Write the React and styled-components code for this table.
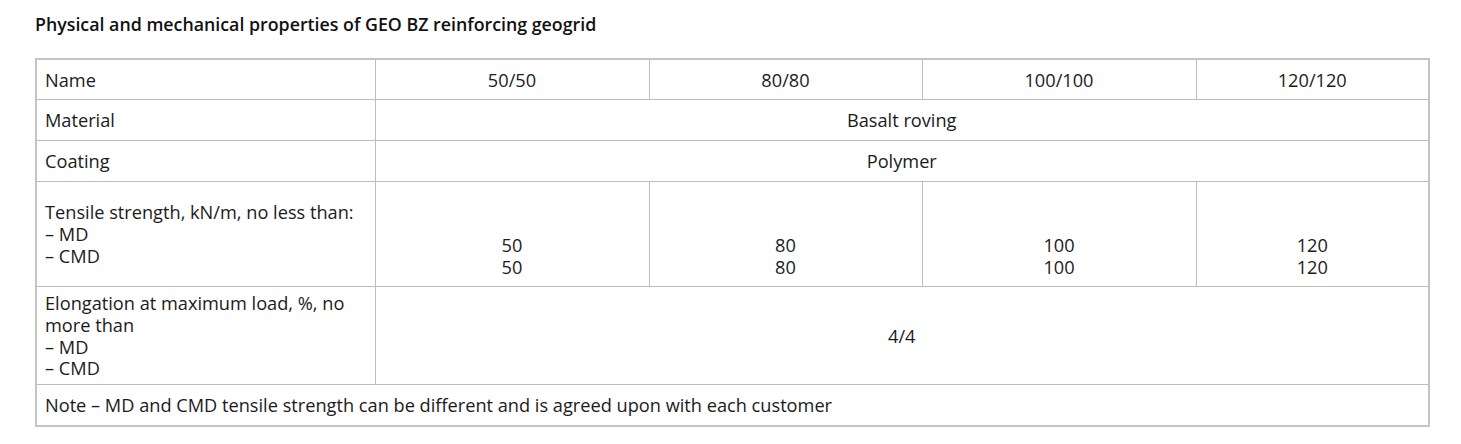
import styled, { createGlobalStyle } from "styled-components";

const GlobalStyle = createGlobalStyle`
	body {
		margin: 0;
		background: #fff;
		color: #1b1b1b;
		font-family: "Open Sans", "Lato", sans-serif;
	}
`;

const Page = styled.div`
	padding: 13px 33px 0 35px;
`;

const Title = styled.h3`
	margin: 0 0 22px;
	font-size: 17.8px;
	line-height: 23px;
	font-weight: 600;
	color: #111;
`;

const Table = styled.table`
	border-collapse: collapse;
	width: 1393px;
	table-layout: fixed;
	font-size: 18.2px;
	line-height: 21.7px;
	border: 2px solid #c4c4c4;
`;

const Row = styled.tr`
	height: ${(p) => p.$h}px;
`;

const Cell = styled.td`
	border: 1px solid #bdbdbd;
	padding: 3px 8px 0;
	vertical-align: middle;
	text-align: ${(p) => (p.$center ? "center" : "left")};
	white-space: pre-line;
`;

const cols = [339, 274, 273, 274, 233];
const grades = ["50/50", "80/80", "100/100", "120/120"];
const strength = ["50", "80", "100", "120"];

export default function App() {
	return (
		<>
			<GlobalStyle />
			<Page>
				<Title>Physical and mechanical properties of GEO BZ reinforcing geogrid</Title>
				<Table>
					<colgroup>
						{cols.map((w, i) => (
							<col key={i} style={{ width: w }} />
						))}
					</colgroup>
					<tbody>
						<Row $h={40}>
							<Cell>Name</Cell>
							{grades.map((g) => (
								<Cell $center key={g}>
									{g}
								</Cell>
							))}
						</Row>
						<Row $h={41}>
							<Cell>Material</Cell>
							<Cell $center colSpan={4}>
								Basalt roving
							</Cell>
						</Row>
						<Row $h={41}>
							<Cell>Coating</Cell>
							<Cell $center colSpan={4}>
								Polymer
							</Cell>
						</Row>
						<Row $h={105}>
							<Cell>{"Tensile strength, kN/m, no less than:\n– MD\n– CMD"}</Cell>
							{strength.map((s) => (
								<Cell $center key={s}>
									{`\u00a0\n\u00a0\n${s}\n${s}`}
								</Cell>
							))}
						</Row>
						<Row $h={98}>
							<Cell>{"Elongation at maximum load, %, no more than\n– MD\n– CMD"}</Cell>
							<Cell $center colSpan={4}>
								4/4
							</Cell>
						</Row>
						<Row $h={42}>
							<Cell colSpan={5}>
								Note – MD and CMD tensile strength can be different and is agreed upon with each customer
							</Cell>
						</Row>
					</tbody>
				</Table>
			</Page>
		</>
	);
}
